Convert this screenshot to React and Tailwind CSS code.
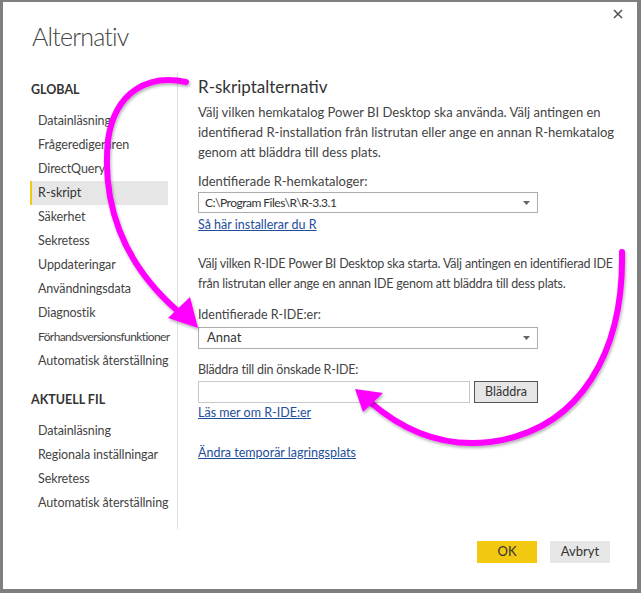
export default function App() {
  const globalItems = [
    "Datainläsning",
    "Frågeredigeraren",
    "DirectQuery",
    "R-skript",
    "Säkerhet",
    "Sekretess",
    "Uppdateringar",
    "Användningsdata",
    "Diagnostik",
    "Förhandsversionsfunktioner",
    "Automatisk återställning",
  ];
  const fileItems = ["Datainläsning", "Regionala inställningar", "Sekretess", "Automatisk återställning"];

  return (
    <div
      className="relative w-[641px] h-[593px] bg-[#7f7f7f] pl-[3px] pt-[2px] pr-[4px] pb-[4px] text-[#333] overflow-hidden"
      style={{ fontFamily: '"Segoe UI", Lato, sans-serif' }}
    >
      <div className="relative w-full h-full bg-white flex flex-col">
        {/* Header */}
        <div className="flex justify-between">
          <h1 className="pl-[29px] pt-[17px] text-[25px] font-light text-[#444] leading-[34px] tracking-[-0.8px]">Alternativ</h1>
          <div className="pr-[14px] pt-[2px]">
            <svg width="10" height="10" viewBox="0 0 10 10" className="mt-[5px]">
              <path d="M1 1L9 9M9 1L1 9" stroke="#555" strokeWidth="1.6" />
            </svg>
          </div>
        </div>

        <div className="flex mt-[19px]">
          {/* Sidebar */}
          <div className="w-[175px] shrink-0 border-r border-[#e1e1e1] pb-[14px] whitespace-nowrap">
            <div className="pl-[28px] pt-[9px] text-[12.5px] font-bold text-[#333] leading-[18px]">GLOBAL</div>
            <ul className="mt-[10px] pl-[27px] pr-[9px]">
              {globalItems.map((t) => (
                <li
                  key={t}
                  className={
                    t === "R-skript"
                      ? "h-[24px] pl-[6px] text-[12.5px] leading-[24px] bg-[#e6e6e6] border-l-2 border-[#f2c811] text-[#333]"
                      : t === "Förhandsversionsfunktioner"
                      ? "h-[24px] pl-[8px] text-[12px] leading-[24px] text-[#444] tracking-[-0.6px]"
                      : "h-[24px] pl-[8px] text-[12.5px] leading-[24px] text-[#444] tracking-[-0.1px]"
                  }
                >
                  {t}
                </li>
              ))}
            </ul>
            <div className="pl-[28px] mt-[18px] text-[12.5px] font-bold text-[#333] leading-[18px]">AKTUELL FIL</div>
            <ul className="mt-[10px] pl-[27px]">
              {fileItems.map((t) => (
                <li key={t} className="h-[24px] pl-[8px] text-[12.5px] leading-[24px] text-[#444] tracking-[-0.1px]">
                  {t}
                </li>
              ))}
            </ul>
          </div>

          {/* Content */}
          <div className="pl-[20px] w-[440px] text-[12.5px] text-[#444] whitespace-nowrap">
            <h2 className="text-[17px] text-[#333] leading-[22px] pt-[4px]">R-skriptalternativ</h2>
            <p className="mt-[4px] leading-[20px] text-[13px]">
              Välj vilken hemkatalog Power BI Desktop ska använda. Välj antingen en
              <br />
              identifierad R-installation från listrutan eller ange en annan R-hemkatalog
              <br />
              genom att bläddra till dess plats.
            </p>
            <div className="mt-[10px] leading-[18px] text-[13px]">Identifierade R-hemkataloger:</div>
            <div className="mt-[2px] w-[340px] h-[21px] border border-[#adadad] flex items-center justify-between pl-[6px] pr-[7px]">
              <span className="text-[#333] text-[12px] tracking-[-0.5px]">C:\Program Files\R\R-3.3.1</span>
              <svg width="7" height="4" viewBox="0 0 7 4"><path d="M0 0H7L3.5 4Z" fill="#666" /></svg>
            </div>
            <a className="block mt-[3px] leading-[18px] text-[#1e4e9a] underline">Så här installerar du R</a>

            <p className="mt-[20px] leading-[20px] text-[12.5px] tracking-[-0.2px]">
              Välj vilken R-IDE Power BI Desktop ska starta. Välj antingen en identifierad IDE
              <br />
              från listrutan eller ange en annan IDE genom att bläddra till dess plats.
            </p>
            <div className="mt-[12px] leading-[18px]">Identifierade R-IDE:er:</div>
            <div className="mt-[3px] w-[340px] h-[22px] border border-[#adadad] flex items-center justify-between pl-[8px] pr-[7px]">
              <span className="text-[#333] text-[13px]">Annat</span>
              <svg width="7" height="4" viewBox="0 0 7 4"><path d="M0 0H7L3.5 4Z" fill="#666" /></svg>
            </div>
            <div className="mt-[12px] leading-[18px] tracking-[-0.2px]">Bläddra till din önskade R-IDE:</div>
            <div className="mt-[2px] flex gap-[4px]">
              <div className="w-[272px] h-[22px] border border-[#c8c8c8]"></div>
              <button className="w-[64px] h-[22px] border border-[#555] bg-[#e6e6e6] text-[12.5px] text-[#333] leading-[20px]">
                Bläddra
              </button>
            </div>
            <a className="block mt-[1px] leading-[18px] text-[#1e4e9a] underline">Läs mer om R-IDE:er</a>
            <a className="block mt-[22px] leading-[18px] text-[#1e4e9a] underline">Ändra temporär lagringsplats</a>
          </div>
        </div>

        {/* Footer buttons */}
        <div className="flex justify-end gap-[13px] pr-[27px] mt-auto mb-[26px]">
          <button className="w-[60px] h-[22px] bg-[#f2c811] text-[13px] text-[#333]">OK</button>
          <button className="w-[60px] h-[22px] bg-[#e6e6e6] text-[13px] text-[#333]">Avbryt</button>
        </div>

        {/* Annotation arrows */}
        <svg className="absolute left-[-3px] top-[-2px] pointer-events-none" width="641" height="593" viewBox="0 0 641 593">
          <defs>
            <filter id="sh" x="-10%" y="-10%" width="120%" height="120%">
              <feDropShadow dx="1" dy="2" stdDeviation="1.5" floodColor="#000" floodOpacity="0.3" />
            </filter>
          </defs>
          <g filter="url(#sh)" fill="none" stroke="#ff00ff" strokeWidth="6" strokeLinecap="round">
            <path d="M186 82 C150 74 115 90 108 140 C102 200 120 262 180 313" />
            <path d="M622 252 C624 350 582 430 490 442 C440 448 400 428 370 402" />
          </g>
          <g filter="url(#sh)" fill="#ff00ff">
            <path d="M198 328 L168 318 L190 297 Z" />
            <path d="M355 389 L383 393 L363 412 Z" />
          </g>
        </svg>
      </div>
    </div>
  );
}
